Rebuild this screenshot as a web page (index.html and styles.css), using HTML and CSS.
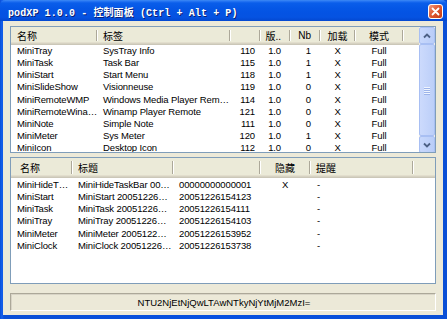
FILE: index.html
```html
<!DOCTYPE html>
<html>
<head>
<meta charset="utf-8">
<link rel="stylesheet" href="styles.css">
</head>
<body>
<div class="window">
  <div class="titlebar">
    <span class="title">podXP 1.0.0 - 控制面板 (Ctrl + Alt + P)</span>
    <span class="close">
      <svg width="15" height="15" viewBox="0 0 15 15">
        <defs>
          <linearGradient id="cg" x1="0" y1="0" x2="1" y2="1">
            <stop offset="0" stop-color="#F0A08A"/>
            <stop offset="0.45" stop-color="#E05A32"/>
            <stop offset="1" stop-color="#C23A14"/>
          </linearGradient>
        </defs>
        <rect x="0.5" y="0.5" width="14" height="14" rx="2.5" fill="url(#cg)" stroke="#FFFFFF" stroke-width="1"/>
        <path d="M4.5 4.5 L10.5 10.5 M10.5 4.5 L4.5 10.5" stroke="#FFFFFF" stroke-width="1.8" stroke-linecap="round"/>
      </svg>
    </span>
  </div>
  <div class="body">
    <div class="list list-top">
      <div class="list-main">
        <div class="hdr cols-top">
          <div class="hc">名称</div>
          <div class="hc">标签</div>
          <div class="hc r"></div>
          <div class="hc r2">版..</div>
          <div class="hc r2">Nb</div>
          <div class="hc c">加载</div>
          <div class="hc c">模式</div>
          <div class="hc last"></div>
        </div>
        <div class="rows">
          <div class="row cols-top"><span>MiniTray</span><span>SysTray Info</span><span class="r">110</span><span class="r2">1.0</span><span class="r2">1</span><span class="c">X</span><span class="c">Full</span></div>
          <div class="row cols-top"><span>MiniTask</span><span>Task Bar</span><span class="r">115</span><span class="r2">1.0</span><span class="r2">1</span><span class="c">X</span><span class="c">Full</span></div>
          <div class="row cols-top"><span>MiniStart</span><span>Start Menu</span><span class="r">118</span><span class="r2">1.0</span><span class="r2">1</span><span class="c">X</span><span class="c">Full</span></div>
          <div class="row cols-top"><span>MiniSlideShow</span><span>Visionneuse</span><span class="r">119</span><span class="r2">1.0</span><span class="r2">0</span><span class="c">X</span><span class="c">Full</span></div>
          <div class="row cols-top"><span>MiniRemoteWMP</span><span>Windows Media Player Rem…</span><span class="r">114</span><span class="r2">1.0</span><span class="r2">0</span><span class="c">X</span><span class="c">Full</span></div>
          <div class="row cols-top"><span>MiniRemoteWina…</span><span>Winamp Player Remote</span><span class="r">121</span><span class="r2">1.0</span><span class="r2">0</span><span class="c">X</span><span class="c">Full</span></div>
          <div class="row cols-top"><span>MiniNote</span><span>Simple Note</span><span class="r">111</span><span class="r2">1.0</span><span class="r2">0</span><span class="c">X</span><span class="c">Full</span></div>
          <div class="row cols-top"><span>MiniMeter</span><span>Sys Meter</span><span class="r">120</span><span class="r2">1.0</span><span class="r2">1</span><span class="c">X</span><span class="c">Full</span></div>
          <div class="row cols-top"><span>MiniIcon</span><span>Desktop Icon</span><span class="r">112</span><span class="r2">1.0</span><span class="r2">0</span><span class="c">X</span><span class="c">Full</span></div>
        </div>
      </div>
      <div class="scrollbar">
        <div class="sb-btn">
          <svg width="8" height="6" viewBox="0 0 8 6"><path d="M1 4.5 L4 1.5 L7 4.5" fill="none" stroke="#4D6185" stroke-width="1.8"/></svg>
        </div>
        <div class="sb-track">
          <div class="sb-thumb"><span></span><span></span><span></span><span></span></div>
        </div>
        <div class="sb-btn">
          <svg width="8" height="6" viewBox="0 0 8 6"><path d="M1 1.5 L4 4.5 L7 1.5" fill="none" stroke="#4D6185" stroke-width="1.8"/></svg>
        </div>
      </div>
    </div>

    <div class="list list-bottom">
      <div class="list-main">
        <div class="hdr hdr-tall cols-bottom">
          <div class="hc pl">名称</div>
          <div class="hc">标题</div>
          <div class="hc"></div>
          <div class="hc c">隐藏</div>
          <div class="hc">提醒</div>
          <div class="hc last"></div>
        </div>
        <div class="rows">
          <div class="row cols-bottom"><span>MiniHideT…</span><span>MiniHideTaskBar 00…</span><span>00000000000001</span><span class="c">X</span><span class="dash">-</span></div>
          <div class="row cols-bottom"><span>MiniStart</span><span>MiniStart 20051226…</span><span>20051226154123</span><span class="c"></span><span class="dash">-</span></div>
          <div class="row cols-bottom"><span>MiniTask</span><span>MiniTask 20051226…</span><span>20051226154111</span><span class="c"></span><span class="dash">-</span></div>
          <div class="row cols-bottom"><span>MiniTray</span><span>MiniTray 20051226…</span><span>20051226154103</span><span class="c"></span><span class="dash">-</span></div>
          <div class="row cols-bottom"><span>MiniMeter</span><span>MiniMeter 2005122…</span><span>20051226153952</span><span class="c"></span><span class="dash">-</span></div>
          <div class="row cols-bottom"><span>MiniClock</span><span>MiniClock 20051226…</span><span>20051226153738</span><span class="c"></span><span class="dash">-</span></div>
        </div>
      </div>
    </div>

    <div class="status">NTU2NjEtNjQwLTAwNTkyNjYtMjM2MzI=</div>
  </div>
</div>
</body>
</html>
```

FILE: styles.css
```css
* { box-sizing: border-box; }
html, body { margin: 0; padding: 0; background: #ffffff; }
body {
  font-family: "Liberation Sans", Arial, "Noto Sans CJK SC", sans-serif;
  font-size: 9.5px;
  color: #000;
}
.window {
  width: 447px;
  height: 319px;
  display: flex;
  flex-direction: column;
  background: linear-gradient(to right, #0A4FD6 0px, #1560EE 2px, #0A4FD6 4px, #0650E0 50%, #0A4FD6 100%);
  padding: 0 4px 4px 3px;
}
.titlebar {
  height: 21px;
  margin: 0 -4px 0 -3px;
  padding: 0 4px 0 8px;
  display: flex;
  align-items: center;
  justify-content: space-between;
  background: linear-gradient(to bottom, #3F8CF3 0px, #2A78F4 1px, #0A5EEA 3px, #0557E6 8px, #0453E3 13px, #0553E2 17px, #0348D0 21px);
  border-radius: 5px 5px 0 0;
}
.title {
  color: #fff;
  font-family: "Liberation Mono", "Noto Sans CJK SC", monospace;
  font-weight: bold;
  font-size: 10px;
  white-space: pre;
  text-shadow: 1px 1px 0 #0A1F73;
  letter-spacing: 0.1px;
  padding-top: 1px;
}
.close {
  display: flex;
  width: 15px;
  height: 15px;
  margin-top: 1px;
}
.body {
  flex: 1;
  background: #ECE9D8;
  padding: 5px 7px 4px 7px;
  display: flex;
  flex-direction: column;
}
.list {
  background: #fff;
  border: 1px solid #7F9DB9;
  display: flex;
  overflow: hidden;
}
.list-top { height: 127px; }
.list-bottom { height: 127px; margin-top: 4px; }
.list-main {
  flex: 1;
  display: flex;
  flex-direction: column;
  overflow: hidden;
  min-width: 0;
}
.hdr {
  height: 18px;
  background: #EBEAD8;
  box-shadow: inset 0 -1px #CBC7B8, inset 0 -2px #D6D2C2, inset 0 -3px #E2DECD;
  flex: none;
}
.hdr-tall { height: 20px; }
.hc {
  position: relative;
  padding: 0 6px;
  display: flex;
  align-items: center;
  font-size: 10px;
  white-space: nowrap;
  padding-bottom: 2px;
}
.hc.pl { padding-left: 9px; }
.hc::after {
  content: "";
  position: absolute;
  right: 0;
  top: 3px;
  bottom: 4px;
  width: 1px;
  background: #ACA899;
  box-shadow: 1px 0 #FFFFFF;
}
.hc.last::after { display: none; }
.hc.c { justify-content: center; }
.hc.r { justify-content: flex-end; padding-right: 5px; }
.hc.r2 { justify-content: flex-end; padding-right: 9px; }
.cols-top {
  display: grid;
  grid-template-columns: 86px 133px 30px 30px 30px 35px 48px 1fr;
}
.cols-bottom {
  display: grid;
  grid-template-columns: 61px 101px 87px 50px 103px 1fr;
}
.rows { flex: 1; overflow: hidden; }
.row {
  height: 12.15px;
  line-height: 12px;
  white-space: nowrap;
  letter-spacing: -0.12px;
}
.row span {
  padding: 0 5px 0 6px;
  overflow: visible;
}
.row span.c { text-align: center; padding: 0; }
.row span.r { text-align: right; padding-right: 5px; }
.row span.r2 { text-align: right; padding-right: 9px; }
.row span.dash { padding-left: 7px; }
.list-bottom .rows { padding-top: 1px; }

.scrollbar {
  width: 16px;
  flex: none;
  display: flex;
  flex-direction: column;
  background: #F3F1EC;
}
.sb-btn {
  height: 17px;
  flex: none;
  display: flex;
  align-items: center;
  justify-content: center;
  background: linear-gradient(to right, #C8D8FC, #B9CDF8);
  border: 1px solid #A8BFF3;
  border-radius: 2px;
}
.sb-track {
  flex: 1;
  display: flex;
  flex-direction: column;
}
.sb-thumb {
  height: 92px;
  background: linear-gradient(to right, #CCDAFC, #BCCFF9);
  border: 1px solid #A8BFF3;
  border-radius: 2px;
  display: flex;
  flex-direction: column;
  align-items: center;
  justify-content: center;
  gap: 1px;
}
.sb-thumb span {
  width: 6px;
  height: 1px;
  background: #EEF4FE;
  box-shadow: 0 1px #9DB4EA;
}
.status {
  margin-top: 9px;
  height: 18px;
  border: 1px solid;
  border-color: #ACA899 #FFFFFF #FFFFFF #ACA899;
  box-shadow: inset 1px 1px #D8D4C6;
  display: flex;
  align-items: center;
  justify-content: center;
  font-size: 9.5px;
  padding-left: 2px;
}
```
